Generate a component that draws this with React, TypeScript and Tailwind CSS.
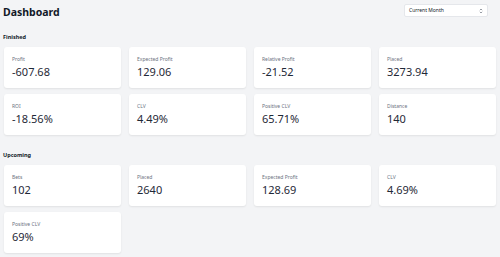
import React from "react";

type Stat = { label: string; value: string };

const finished: Stat[] = [
  { label: "Profit", value: "-607.68" },
  { label: "Expected Profit", value: "129.06" },
  { label: "Relative Profit", value: "-21.52" },
  { label: "Placed", value: "3273.94" },
  { label: "ROI", value: "-18.56%" },
  { label: "CLV", value: "4.49%" },
  { label: "Positive CLV", value: "65.71%" },
  { label: "Distance", value: "140" },
];

const upcoming: Stat[] = [
  { label: "Bets", value: "102" },
  { label: "Placed", value: "2640" },
  { label: "Expected Profit", value: "128.69" },
  { label: "CLV", value: "4.69%" },
  { label: "Positive CLV", value: "69%" },
];

function Card({ s }: { s: Stat }) {
  return (
    <div className="bg-white rounded-[3px] shadow-[0_1px_2px_rgba(0,0,0,0.08)] h-[41px] pl-[8px] pt-[9px]">
      <div className="text-[5px] leading-[7px] text-[#6b7280]">{s.label}</div>
      <div className="text-[11px] leading-[15px] text-[#1f2937] mt-[1px]">{s.value}</div>
    </div>
  );
}

export default function App() {
  return (
    <div
      className="w-[500px] h-[257px] bg-[#f3f4f6] px-[4px] pt-[3px] overflow-hidden"
      style={{ fontFamily: "'Noto Sans', 'Open Sans', sans-serif" }}
    >
      <div className="flex items-start justify-between">
        <h1 className="text-[10.5px] leading-[16px] font-bold text-[#111827] pt-[1px] -ml-[1px]">Dashboard</h1>
        <div className="mt-[1px] mr-[8px] w-[84px] h-[13px] bg-white rounded-[2px] border border-[#e5e7eb] flex items-center justify-between px-[4px]">
          <span className="text-[5px] text-[#111827]">Current Month</span>
          <svg width="4" height="6" viewBox="0 0 4 6" className="text-[#6b7280]">
            <path d="M0.8 2.2 L2 1 L3.2 2.2 M0.8 3.8 L2 5 L3.2 3.8" fill="none" stroke="currentColor" strokeWidth="0.7" />
          </svg>
        </div>
      </div>
      <div className="text-[5.5px] font-bold text-[#111827] mt-[13px] leading-[8px] -ml-[1px]">Finished</div>
      <div className="grid grid-cols-4 gap-x-[8px] gap-y-[6px] mt-[6px]">
        {finished.map((s, i) => (
          <Card key={i} s={s} />
        ))}
      </div>
      <div className="text-[5.5px] font-bold text-[#111827] mt-[16px] leading-[8px] -ml-[1px]">Upcoming</div>
      <div className="grid grid-cols-4 gap-x-[8px] gap-y-[6px] mt-[6px]">
        {upcoming.map((s, i) => (
          <Card key={i} s={s} />
        ))}
      </div>
    </div>
  );
}
